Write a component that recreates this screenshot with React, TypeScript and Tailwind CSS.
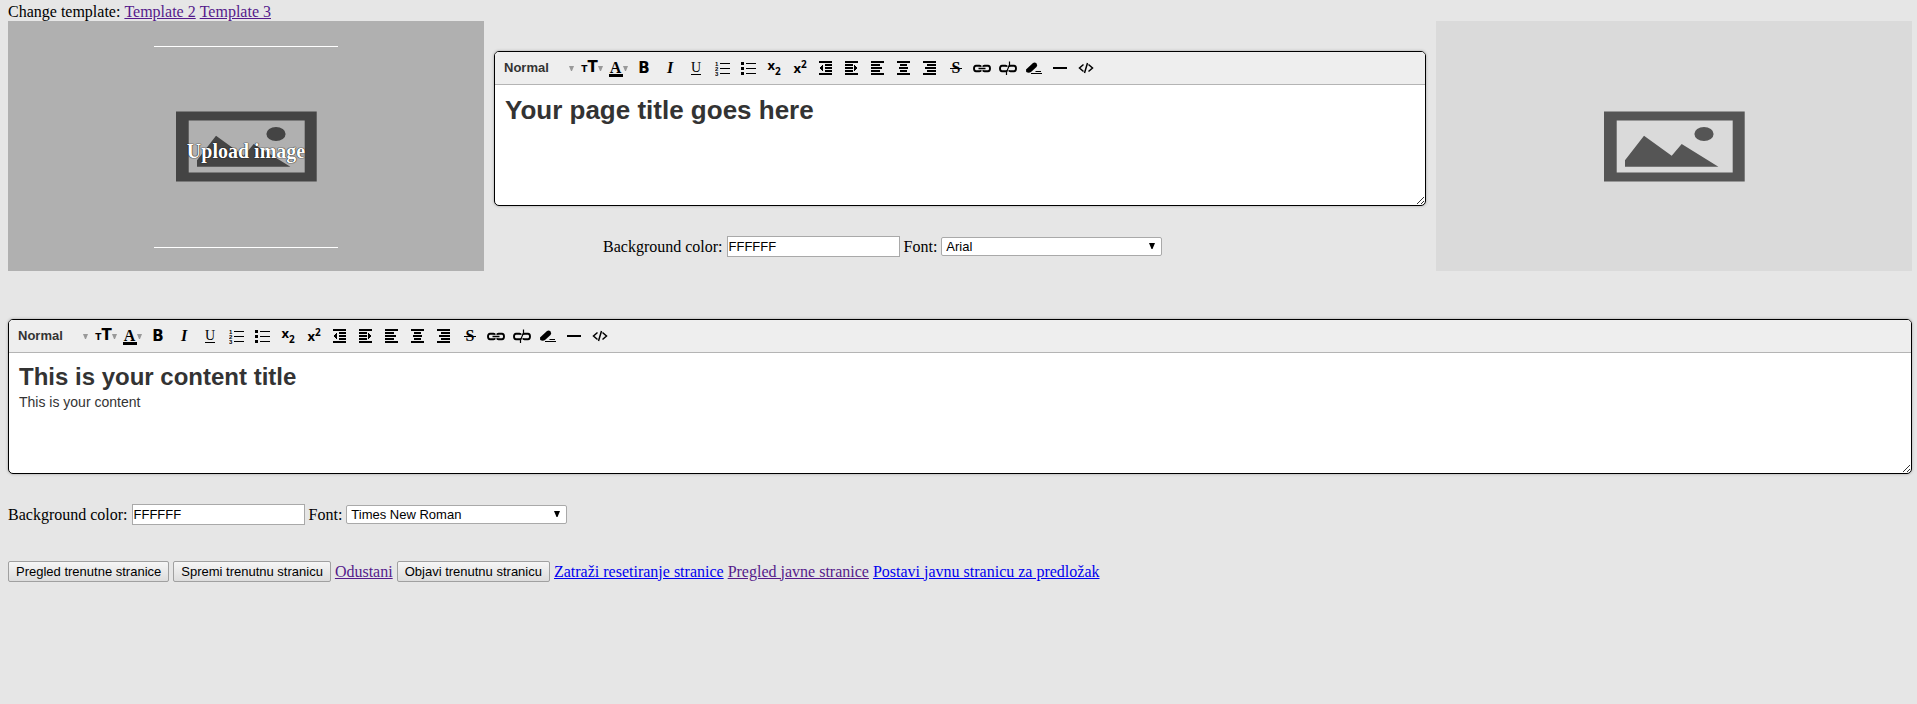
import { useId, type ReactNode } from 'react';

const stroke = { stroke: 'currentColor', fill: 'none' } as const;

function Caret() {
  return (
    <svg className="shrink-0 text-[#999]" width="5" height="5" viewBox="0 0 5 5" aria-hidden="true">
      <path d="M0 0h5L3 5H2z" fill="currentColor" />
    </svg>
  );
}

function Lines({ rows, children }: { rows: [number, number][]; children?: ReactNode }) {
  return (
    <svg width="14" height="14" viewBox="0 0 14 14" aria-hidden="true" shapeRendering="crispEdges">
      {rows.map(([x, w], i) => (
        <rect key={i} x={x} y={i * 3} width={w} height="2" fill="currentColor" />
      ))}
      {children}
    </svg>
  );
}

function Chain({ broken }: { broken?: boolean }) {
  return (
    <svg width="18" height="14" viewBox="0 0 18 14" aria-hidden="true">
      <path d="M8 5.800Q7.800 4.800 6.500 4.800H3Q1 4.800 1 7.500T3 10.200H6.500Q7.800 10.200 8 9.200" {...stroke} strokeWidth="1.900" />
      <path d="M10 5.800Q10.200 4.800 11.500 4.800H15Q17 4.800 17 7.500T15 10.200H11.500Q10.200 10.200 10 9.200" {...stroke} strokeWidth="1.900" />
      {broken ? (
        <path d="M10.500 0.500V4L7.500 11V14" {...stroke} strokeWidth="1.200" />
      ) : (
        <path d="M5.500 7.500H12.500" {...stroke} strokeWidth="1.600" />
      )}
    </svg>
  );
}

const tools: { name: string; icon: ReactNode }[] = [
  {
    name: 'Font size',
    icon: (
      <span className="flex items-center">
        <span className="flex items-baseline font-['DejaVu_Sans',sans-serif] font-bold">
          <span className="text-[9px] leading-4">T</span>
          <span className="text-[15px] leading-4">T</span>
        </span>
        <Caret />
      </span>
    ),
  },
  {
    name: 'Text color',
    icon: (
      <span className="flex items-center pt-px">
        <span className="flex w-[14px] justify-center border-b-3 border-black font-['Liberation_Serif',serif] text-base leading-[13px] font-bold">
          A
        </span>
        <Caret />
      </span>
    ),
  },
  { name: 'Bold', icon: <span className="font-['DejaVu_Sans',sans-serif] text-[15px] leading-4 font-bold">B</span> },
  {
    name: 'Italic',
    icon: <span className="font-['Liberation_Serif',serif] text-base leading-4 font-bold italic">I</span>,
  },
  {
    name: 'Underline',
    icon: (
      <span className="border-b border-black font-['Liberation_Serif',serif] text-[14px] leading-[13px]">U</span>
    ),
  },
  {
    name: 'Ordered list',
    icon: (
      <svg width="15" height="15" viewBox="0 0 15 15" aria-hidden="true">
        <path d="M5 2.500H15M5 7.500H15M5 12.500H15" {...stroke} />
        <g fontFamily="Liberation Sans, sans-serif" fontSize="6" fontWeight="bold" fill="currentColor">
          <text x="0" y="4.500">1</text>
          <text x="0" y="9.500">2</text>
          <text x="0" y="14.500">3</text>
        </g>
      </svg>
    ),
  },
  {
    name: 'Bullet list',
    icon: (
      <svg width="15" height="15" viewBox="0 0 15 15" aria-hidden="true">
        <path d="M5 2.500H15M5 7.500H15M5 12.500H15" {...stroke} />
        <path d="M0 1h3v3H0zM0 6h3v3H0zM0 11h3v3H0z" fill="currentColor" />
      </svg>
    ),
  },
  {
    name: 'Subscript',
    icon: (
      <span className="flex font-['Open_Sans',sans-serif] text-[13px] leading-4 font-bold">
        x<span className="pt-[6px] text-[10px]">2</span>
      </span>
    ),
  },
  {
    name: 'Superscript',
    icon: (
      <span className="flex font-['Open_Sans',sans-serif] text-[13px] leading-4 font-bold">
        x<span className="text-[10px] leading-[8px]">2</span>
      </span>
    ),
  },
  {
    name: 'Outdent',
    icon: (
      <Lines rows={[[0, 13], [6, 7], [6, 7], [6, 7], [0, 13]]}>
        <path d="M0 7L4 4V10z" fill="currentColor" />
      </Lines>
    ),
  },
  {
    name: 'Indent',
    icon: (
      <Lines rows={[[0, 13], [0, 8], [0, 8], [0, 8], [0, 13]]}>
        <path d="M13 7L9 4V10z" fill="currentColor" />
      </Lines>
    ),
  },
  { name: 'Align left', icon: <Lines rows={[[0, 13], [0, 9], [0, 11], [0, 9], [0, 13]]} /> },
  { name: 'Align center', icon: <Lines rows={[[0, 13], [3, 7], [2, 9], [3, 7], [0, 13]]} /> },
  { name: 'Align right', icon: <Lines rows={[[0, 13], [4, 9], [2, 11], [4, 9], [0, 13]]} /> },
  {
    name: 'Strikethrough',
    icon: (
      <span className="relative px-[2px] font-['Liberation_Serif',serif] text-base leading-4 font-bold">
        S
        <span className="absolute inset-x-0 top-2 border-t border-black" />
      </span>
    ),
  },
  { name: 'Link', icon: <Chain /> },
  { name: 'Unlink', icon: <Chain broken /> },
  {
    name: 'Clear format',
    icon: (
      <svg width="18" height="14" viewBox="0 0 18 14" aria-hidden="true">
        <path d="M1 8.500L8 2Q10 1 11.500 2.500T11.500 6L6 11Q4.500 12 2.500 11.500T1 8.500z" fill="currentColor" />
        <path d="M10.500 10.500H16M6 12.500H17" {...stroke} />
      </svg>
    ),
  },
  {
    name: 'Horizontal rule',
    icon: (
      <svg width="14" height="14" viewBox="0 0 14 14" aria-hidden="true">
        <path d="M0 6h14v2H0z" fill="currentColor" />
      </svg>
    ),
  },
  {
    name: 'Source',
    icon: (
      <svg width="16" height="14" viewBox="0 0 16 14" aria-hidden="true">
        <path d="M5.500 3.500L1.500 7L5.500 10.500M10.500 3.500L14.500 7L10.500 10.500M9.500 2L6.500 12" {...stroke} strokeWidth="1.500" />
      </svg>
    ),
  },
];

function Editor({ label, children }: { label: string; children: ReactNode }) {
  return (
    <section
      aria-label={label}
      className="relative overflow-hidden rounded-[5px] border border-black bg-white font-['Liberation_Sans',sans-serif] text-[#333] shadow-[0_0_3px_rgba(0,0,0,0.3)]"
    >
      <div role="toolbar" aria-label="Formatting" className="flex flex-wrap items-center border-b border-[#b4b4b4] bg-[#eee]">
        <button type="button" className="flex h-8 w-[84px] items-center justify-between pr-[5px] pl-[9px] text-[13px] font-bold">
          Normal
          <Caret />
        </button>
        {tools.map((tool) => (
          <button
            key={tool.name}
            type="button"
            aria-label={tool.name}
            className="flex h-8 w-[26px] items-center justify-center text-black"
          >
            {tool.icon}
          </button>
        ))}
      </div>
      <div
        contentEditable
        suppressContentEditableWarning
        role="textbox"
        aria-multiline="true"
        aria-label={label}
        className="h-[120px] px-[10px] py-2 outline-none"
      >
        {children}
      </div>
      <svg className="absolute right-0 bottom-0" width="9" height="9" viewBox="0 0 9 9" aria-hidden="true">
        <path d="M1 8L8 1M5 8L8 5" {...stroke} />
      </svg>
    </section>
  );
}

function StyleFields({ font }: { font: string }) {
  const id = useId();
  return (
    <div className="flex flex-wrap items-center gap-1">
      <label htmlFor={`${id}-color`}>Background color:</label>
      <input
        id={`${id}-color`}
        defaultValue="FFFFFF"
        className="h-[21px] w-[173px] border border-[#a9a9a9] bg-white px-px font-['Liberation_Sans',sans-serif] text-[13px]"
      />
      <label htmlFor={`${id}-font`}>Font:</label>
      <span className="relative flex">
        <select
          id={`${id}-font`}
          defaultValue={font}
          className="h-[19px] w-[221px] appearance-none rounded-xs border border-[#a9a9a9] bg-white px-1 font-['Liberation_Sans',sans-serif] text-[13px] leading-4"
        >
          <option>Arial</option>
          <option>Times New Roman</option>
        </select>
        <svg className="pointer-events-none absolute top-[6px] right-[7px]" width="6" height="6" viewBox="0 0 6 6" aria-hidden="true">
          <path d="M0 0H6L3.500 6H2.500z" />
        </svg>
      </span>
    </div>
  );
}

function Placeholder() {
  return (
    <svg width="141" height="71" viewBox="0 0 141 71" aria-hidden="true">
      <path
        fill="currentColor"
        fillRule="evenodd"
        d="M0 0.400H140.700V70.500H0zM12.700 9.400V61.600H128.700V9.400z"
      />
      <path fill="currentColor" d="M21 49.300L40 24.700L67.700 44.700L77.700 33L114.400 55.700H21z" />
      <ellipse cx="100" cy="23" rx="9.600" ry="7" fill="currentColor" />
    </svg>
  );
}

const visited = 'text-[#551a8b] underline';
const fresh = 'text-[#0000ee] underline';
const pushButton =
  "h-[21px] rounded-xs border border-[#a0a0a0] bg-linear-to-b from-[#f6f6f6] to-[#dddddd] px-[7px] font-['Liberation_Sans',sans-serif] text-[13px] leading-4";

export default function App() {
  return (
    <div className="min-h-screen bg-[#e6e6e6] pt-[3px] pr-[5px] pb-8 pl-2 font-['Liberation_Serif',serif] text-base leading-[18px] text-black">
      <nav className="flex gap-1">
        <span>Change template:</span>
        <a href="#template-2" className={visited}>Template 2</a>
        <a href="#template-3" className={visited}>Template 3</a>
      </nav>

      <main>
        <div className="grid grid-cols-[1fr_2fr_1fr]">
          <button type="button" className="relative flex h-[250px] items-center justify-center bg-[#b0b0b0] text-[#444]">
            <Placeholder />
            <span className="absolute inset-0 flex items-center justify-center pt-[25px] pb-[23px]">
              <span className="flex h-full w-[184px] items-center justify-center border-y border-white pt-2 text-xl leading-6 font-bold text-white [text-shadow:0_0_1px_#000,0_0_1px_#000]">
                Upload image
              </span>
            </span>
          </button>
          <div className="flex min-w-0 flex-col gap-[30px] pt-[30px]">
            <div className="px-[10px]">
              <Editor label="Page title">
                <h1 className="text-[26px] leading-[34px] font-bold">Your page title goes here</h1>
              </Editor>
            </div>
            <div className="pl-[12.5%]">
              <StyleFields font="Arial" />
            </div>
          </div>
          <div className="flex h-[250px] items-center justify-center bg-[#dadada] text-[#555]">
            <Placeholder />
          </div>
        </div>

        <div className="flex flex-col gap-[30px] pt-12">
          <Editor label="Page content">
            <h2 className="text-2xl leading-8 font-bold">This is your content title</h2>
            <p className="text-sm leading-[18px]">This is your content</p>
          </Editor>
          <StyleFields font="Times New Roman" />
        </div>

        <div className="flex flex-wrap items-center gap-1 pt-9">
          <button type="button" className={pushButton}>Pregled trenutne stranice</button>
          <button type="button" className={pushButton}>Spremi trenutnu stranicu</button>
          <a href="#odustani" className={visited}>Odustani</a>
          <button type="button" className={pushButton}>Objavi trenutnu stranicu</button>
          <a href="#reset" className={fresh}>Zatraži resetiranje stranice</a>
          <a href="#javna" className={visited}>Pregled javne stranice</a>
          <a href="#predlozak" className={fresh}>Postavi javnu stranicu za predložak</a>
        </div>
      </main>
    </div>
  );
}
